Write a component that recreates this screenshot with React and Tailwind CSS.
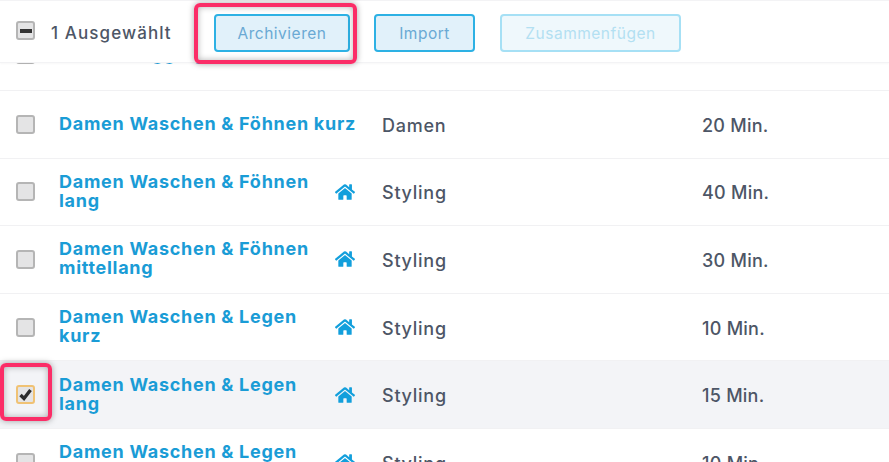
import React from "react";
import { FaHome } from "react-icons/fa";

const rows = [
  { name: "Damen Legging", cat: "Haarschnitt", time: "30 Min.", h: false, clipped: true },
  { name: "Damen Waschen & Föhnen kurz", cat: "Damen", time: "20 Min.", h: false },
  { name: "Damen Waschen & Föhnen lang", cat: "Styling", time: "40 Min.", h: true },
  { name: "Damen Waschen & Föhnen mittellang", cat: "Styling", time: "30 Min.", h: true },
  { name: "Damen Waschen & Legen kurz", cat: "Styling", time: "10 Min.", h: true },
  { name: "Damen Waschen & Legen lang", cat: "Styling", time: "15 Min.", h: true, sel: true },
  { name: "Damen Waschen & Legen mittellang", cat: "Styling", time: "10 Min.", h: true },
];

function Box({ checked, minus }) {
  return (
    <span className={`flex h-[19px] w-[19px] shrink-0 items-center justify-center rounded-[3px] border-2 bg-[#e4e4e5] ${checked ? "border-[#f0c274]" : "border-[#b5b5b5]"}`}>
      {minus && <span className="h-[4px] w-[12px] bg-[#333]" />}
      {checked && (
        <svg width="15" height="14" viewBox="0 0 15 14">
          <path d="M2.5 7 L6 10.5 L12.5 2" fill="none" stroke="#2b2b2b" strokeWidth="3.4" />
        </svg>
      )}
    </span>
  );
}

function Row({ r }) {
  return (
    <div className={`flex h-[67.6px] items-center border-b border-[#f1f1f3] pl-[16px] ${r.clipped ? "pb-[5px]" : ""} ${r.sel ? "bg-[#f3f4f7]" : "bg-white"}`}>
      <Box checked={r.sel} />
      <div className="ml-[24px] flex w-[323px] items-center">
        <div className="min-w-0 flex-1 pb-[2px] pr-[8px] text-[18px] font-bold leading-[19px] tracking-[0.72px] text-[#1a9cd6]">{r.name}</div>
        {r.h && <FaHome className="mr-[27px] shrink-0 text-[#129fdc]" size={20} />}
      </div>
      <div className="w-[320px] pt-[2px] text-[18px] font-medium tracking-[0.75px] text-[#4d5666]">{r.cat}</div>
      <div className="pt-[2px] text-[18px] font-medium tracking-[0.25px] text-[#4d5666]">{r.time}</div>
    </div>
  );
}

function Btn({ children, w, faded, ml }) {
  return (
    <button className={`mt-[5px] h-[38px] rounded-[4px] border-2 pt-[1px] text-[15.5px] tracking-[0.5px] ${w} ${ml} ${faded ? "border-[#a6e0f5] bg-[#eff8fc] text-[#b3e0f2]" : "border-[#2db1e4] bg-[#e1f1fa] text-[#6aa9d4]"}`}>
      {children}
    </button>
  );
}

export default function App() {
  return (
    <div className="relative h-[462px] w-[889px] overflow-hidden bg-white font-['Inter',sans-serif]">
      <div className="relative z-10 flex h-[63px] items-center border-y border-[#f3f3f5] bg-white pb-[2px] pl-[16px] shadow-[0_1px_2px_rgba(0,0,0,0.03)]">
        <Box minus />
        <span className="ml-[16px] w-[163px] pt-[6px] text-[17px] font-medium tracking-[1.1px] text-[#4d5666]">1 Ausgewählt</span>
        <Btn w="w-[136px]">Archivieren</Btn>
        <Btn w="w-[101px]" ml="ml-[24px]">Import</Btn>
        <Btn w="w-[181px]" ml="ml-[25px]" faded>Zusammenfügen</Btn>
      </div>
      <div className="-mt-[39.6px]">
        {rows.map((r) => <Row key={r.name} r={r} />)}
      </div>
      <div className="absolute left-[194px] top-[3px] z-20 h-[61px] w-[163px] rounded-[6px] border-[4px] border-[#fb2d67] shadow-[0_0_6px_rgba(0,0,0,0.35),inset_0_0_6px_rgba(0,0,0,0.3)]" />
      <div className="absolute left-0 top-[363px] z-20 h-[58px] w-[52px] rounded-[6px] border-[4px] border-[#fb2d67] shadow-[0_0_6px_rgba(0,0,0,0.35),inset_0_0_6px_rgba(0,0,0,0.3)]" />
    </div>
  );
}
